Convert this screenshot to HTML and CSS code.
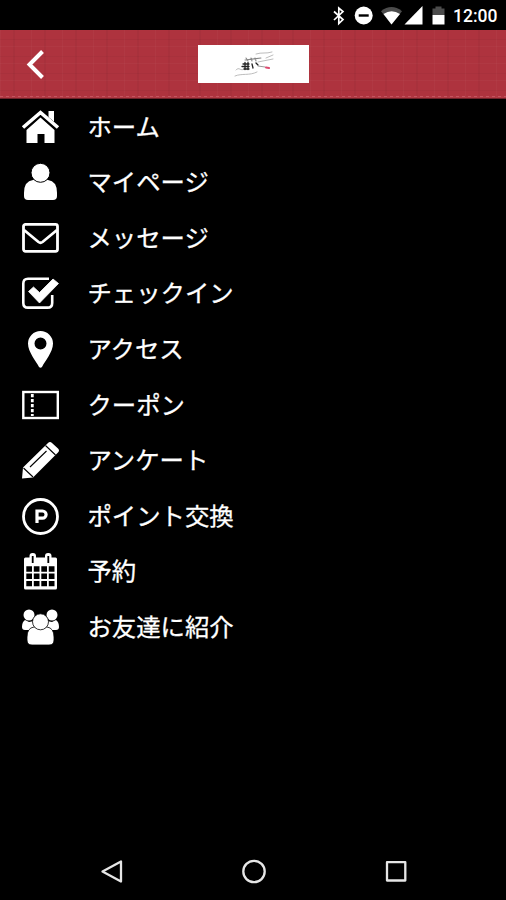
FILE: index.html
```html
<!DOCTYPE html>
<html lang="ja">
<head>
<meta charset="utf-8">
<title>メニュー</title>
<link rel="stylesheet" href="styles.css">
</head>
<body>
<div class="screen">
  <div class="status">
    <svg class="status-icons" viewBox="330 0 120 30">
      <path d="M334 11.500l9 8-4.200 4V8l4.200 3.500-9 8.500" fill="none" stroke="#fff" stroke-width="1.700"/>
      <circle cx="363.700" cy="15.500" r="9" fill="#fff"/><path d="M358.700 15.500h10" stroke="#000" stroke-width="2.400"/>
      <path d="M381 11.200Q391.500 3 402 11.200L391.500 24.500z" fill="#4c4c4c"/>
      <path d="M383.500 14Q391.500 8.500 400 14L391.500 24.500z" fill="#fff"/>
      <path d="M422.500 6v18.500H404.500z" fill="#fff"/>
      <path d="M432.500 8.500h3V6.500h6v2h3V15h-12z" fill="#4c4c4c"/><path d="M432.500 15h12v9.500h-12z" fill="#fff"/>
    </svg>
    <span class="clock">12:00</span>
  </div>
  <header class="header">
    <svg class="back" viewBox="0 0 20 32"><path d="M16.500 3.500L3.500 16.500l13 13" fill="none" stroke="#fff" stroke-width="4"/></svg>
    <div class="logo">
      <svg viewBox="0 0 112 38" fill="none" stroke-linecap="round">
        <path d="M37 31c7-3 14 0 22-4M38 25c3-4 5 2 8-1M58 9c6-2 10 0 16-2M68 13l7-3M60 17l15-3" stroke="#b5b5b5" stroke-width=".9"/>
        <path d="M47 15l16-2M48 13l2 3m3-3l1 3m3-3l1 3" stroke="#888" stroke-width="1.100"/>
        <path d="M45 19h6M44 21.500h7M46 24h5M47 17.500v7M50 17.500v7M54 19l1 4M58 18l2 2" stroke="#222" stroke-width="1.300"/>
        <path d="M60 21l7 1" stroke="#999"/><path d="M68 22.500l3 .5" stroke="#dc4b70" stroke-width="2"/>
      </svg>
    </div>
  </header>
  <nav class="menu">
    <a class="item"><svg viewBox="0 0 40 40"><path d="M6.500 23L20.500 10.500 34.500 23V36H24.500v-9h-7v9H6.500z"/><path d="M28.500 4H34v11l-5.500-4.500z"/><path d="M3 21.500L20.500 6.500l17.500 15" fill="none" stroke="#000" stroke-width="5"/><path d="M3 20.500L20.500 5.500l17.500 15" fill="none" stroke="#fff" stroke-width="3.600"/></svg><span>ホーム</span></a>
    <a class="item"><svg viewBox="0 0 40 40"><path d="M13 18q-9 1-9 13v3q0 4 4 4h25q4 0 4-4v-3q0-12-9-13z"/><circle cx="20.500" cy="10.800" r="9.500" stroke="#000"/></svg><span>マイページ</span></a>
    <a class="item"><svg viewBox="0 0 40 40"><g fill="none" stroke="#fff" stroke-width="2.800"><rect x="3.500" y="6.300" width="34" height="27" rx="2"/><path d="M4 12l14.500 12q2 1.500 4 0l14.500-12"/></g></svg><span>メッセージ</span></a>
    <a class="item"><svg viewBox="0 0 40 40"><path d="M29 5.700H8q-4.700 0-4.700 4.700v19.500q0 4.700 4.700 4.700h19.500q4.700 0 4.700-4.700V22" fill="none" stroke="#fff" stroke-width="2.600"/><path d="M8.500 18.500l5-4.500 6 5.500L33 6l5.500 4.500L19.500 30z" stroke="#fff" stroke-width=".8" stroke-linejoin="round"/></svg><span>チェックイン</span></a>
    <a class="item"><svg viewBox="0 0 40 40"><path fill-rule="evenodd" d="M20.500 2a12.500 12.500 0 0 1 12.500 12.500C33 23 25 32 22 38q-1.500 1.600-3 0C16 32 8 23 8 14.500A12.500 12.500 0 0 1 20.500 2zm0 6.500a6 6 0 1 0 0 12 6 6 0 0 0 0-12z"/></svg><span>アクセス</span></a>
    <a class="item"><svg viewBox="0 0 40 40"><g fill="none" stroke="#fff"><rect x="3.300" y="7" width="34.500" height="26" stroke-width="2.400"/><path d="M12.300 9v22" stroke-width="2.800" stroke-dasharray="3.300 1.700"/></g></svg><span>クーポン</span></a>
    <a class="item"><svg viewBox="0 0 40 40"><path d="M2 38.500l1-11L28 3q2-2 4 0l6 5.500q2 2 0 4L13 37.500z"/><path d="M3.500 28l9.500 9M25.500 5.500l10 9.500M10 27L26.500 11" fill="none" stroke="#000" stroke-width="1.100"/></svg><span>アンケート</span></a>
    <a class="item"><svg viewBox="0 0 40 40"><g fill="none" stroke="#fff"><circle cx="20.500" cy="20.500" r="17" stroke-width="2.800"/><path d="M17 27V15h5.500a3.600 3.600 0 0 1 0 7.200H17" stroke-width="3.200"/></g></svg><span>ポイント交換</span></a>
    <a class="item"><svg viewBox="0 0 40 40"><path d="M5.500 6.500h30q1.500 0 1.500 1.500v29q0 1.500-1.500 1.500h-30Q4 38.500 4 37V8q0-1.500 1.500-1.500z"/><rect x="9.500" y="2" width="6.500" height="11" rx="3"/><rect x="25" y="2" width="6.500" height="11" rx="3"/><path d="M12.700 5v7M28.300 5v7" stroke="#000" stroke-width="1.800"/><path d="M6.300 18h28.500M6.300 25.300h28.500M6.300 32.600h28.500" fill="none" stroke="#000" stroke-width="5.400" stroke-dasharray="5.700 1.800"/></svg><span>予約</span></a>
    <a class="item"><svg viewBox="0 0 40 40"><circle cx="9" cy="8" r="5.500"/><circle cx="32" cy="8" r="5.500"/><path d="M5 13l4 2 5-1 3 9H5q-3 0-3-3 0-5 3-7zM36 13l-4 2-5-1-3 9h12q3 0 3-3 0-5-3-7z"/><path d="M14 20q-7 1-7 10v3q0 5 5 5h17q5 0 5-5v-3q0-9-7-10z" stroke="#000" stroke-width=".8"/><circle cx="20.500" cy="14.800" r="8" stroke="#000" stroke-width=".8"/></svg><span>お友達に紹介</span></a>
  </nav>
  <footer class="navbar">
    <svg viewBox="0 0 28 28"><path d="M23 4.500v20L4.500 14.500z"/></svg>
    <svg viewBox="0 0 28 28"><circle cx="14" cy="14.500" r="10.700"/></svg>
    <svg viewBox="0 0 28 28"><rect x="5" y="5.200" width="18.300" height="18.300"/></svg>
  </footer>
</div>
</body>
</html>
```
FILE: styles.css
```css
body { margin: 0; background: #000; color: #fff; font-family: "Noto Sans CJK JP", sans-serif; }
.screen { display: flex; flex-direction: column; width: 506px; height: 900px; background: #000; overflow: hidden; }
.status { display: flex; justify-content: flex-end; align-items: center; height: 30px; padding-right: 9px; }
.status-icons { width: 120px; height: 30px; }
.clock { width: 44px; margin-left: 3px; padding-top: 2px; font: 500 17.5px/32px Roboto, sans-serif; white-space: nowrap; }
.header {
  display: grid; grid-template-columns: 1fr 112px 1fr; align-items: center;
  box-sizing: border-box; height: 69px; border-bottom: 1px solid #6d2028;
  background:
    repeating-linear-gradient(90deg, #c4545f 0 3px, #b03843 3px 6px) 0 66px / 100% 1px no-repeat,
    repeating-linear-gradient(90deg, #ffffff07 0 1px, transparent 1px 13px, #00000009 13px 15px, transparent 15px 31px),
    repeating-linear-gradient(0deg, #ffffff07 0 1px, transparent 1px 7px, #00000009 7px 8px, transparent 8px 17px),
    #ae333e;
}
.back { width: 20px; height: 32px; margin-left: 26px; }
.logo { height: 38px; margin-left: 1px; background: #fff; }
.logo svg { display: block; width: 112px; height: 38px; }
.menu { flex: 1; }
.item { display: flex; align-items: center; height: 55.55px; padding-left: 20px; gap: 27.4px; font-size: 24.4px; line-height: 36px; }
.item span { padding-bottom: 2px; -webkit-text-stroke: .3px #fff; }
.item svg { width: 40px; height: 40px; fill: #fff; }
.navbar { display: flex; justify-content: space-between; height: 43px; padding: 0 96px 0 98px; }
.navbar svg { width: 28px; height: 28px; fill: none; stroke: #e6e6e6; stroke-width: 2.3; stroke-linejoin: round; }
```
